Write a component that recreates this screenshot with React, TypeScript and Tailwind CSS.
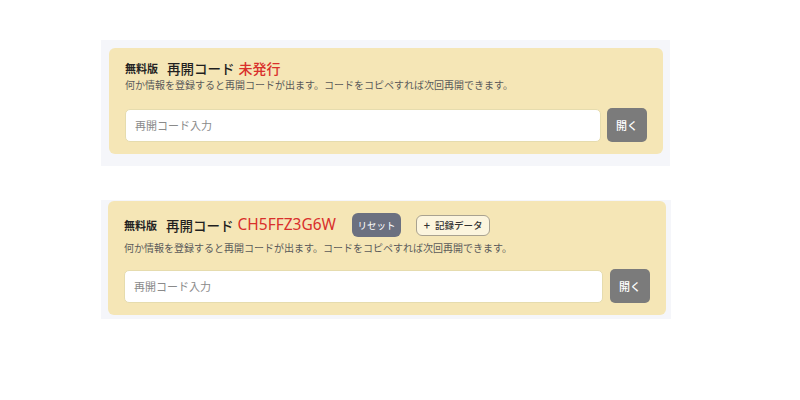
const jp = { fontFamily: '"Noto Sans CJK JP", "Noto Sans", sans-serif' };

function CodeInputRow({ gap }: { gap: string }) {
  return (
    <div className={`flex items-center ${gap}`}>
      <input
        placeholder="再開コード入力"
        className="h-[33px] flex-1 rounded-[5px] border border-[#e6dcae] bg-white px-[9px] text-[11px] text-[#333] outline-none placeholder:text-[#8a8a8a]"
      />
      <button className="h-[34px] w-[40px] rounded-[5px] bg-[#7b7b7b] text-[11px] font-medium text-white">
        開く
      </button>
    </div>
  );
}

function Description() {
  return (
    <p className="text-[10px] leading-[14px] text-[#5a5a5a]">
      何か情報を登録すると再開コードが出ます。コードをコピペすれば次回再開できます。
    </p>
  );
}

export default function App() {
  return (
    <div className="min-h-[400px] w-[800px] bg-white pt-[40px]" style={jp}>
      {/* before a code is issued */}
      <div className="ml-[101px] w-[569px] bg-[#f5f6fa] pb-[12px] pl-[8px] pr-[7px] pt-[8px]">
        <div className="rounded-md bg-[#f5e6b6] px-4 pb-[12px] pt-[10px]">
          <div className="flex h-[20px] items-center">
            <span className="text-[11px] font-bold text-[#222]">無料版</span>
            <span className="ml-[9px] text-[13.5px] font-medium text-[#1f1f1f]">再開コード</span>
            <span className="ml-[4px] text-[14px] font-medium text-[#d9302c]">未発行</span>
          </div>
          <Description />
          <div className="mt-[16px]">
            <CodeInputRow gap="gap-[6px]" />
          </div>
        </div>
      </div>

      {/* after a code is issued */}
      <div className="ml-[101px] mt-[34px] w-[570px] bg-[#f5f6fa] pb-[4px] pl-[7px] pr-[5px] pt-[1px]">
        <div className="rounded-md bg-[#f5e6b6] px-4 pb-[12px] pt-[12px]">
          <div className="flex h-[24px] items-center">
            <span className="text-[11px] font-bold text-[#222]">無料版</span>
            <span className="ml-[9px] text-[13.5px] font-medium text-[#1f1f1f]">再開コード</span>
            <span
              className="ml-[4px] text-[15.5px] font-normal text-[#d9302c]"
              style={{ fontFamily: '"Noto Sans", "Open Sans", sans-serif' }}
            >
              CH5FFZ3G6W
            </span>
            <button className="ml-[16px] h-[24px] w-[49px] rounded-md bg-[#6b7080] text-[9.5px] text-white">
              リセット
            </button>
            <button className="ml-[15px] flex h-[21px] w-[74px] items-center justify-center gap-[5px] rounded-md border border-[#a9a290] bg-[#fcf5de] text-[9.5px] font-medium text-[#333]">
              <span className="text-[11px] leading-none">+</span>
              <span>記録データ</span>
            </button>
          </div>
          <div className="mt-[4px]">
            <Description />
          </div>
          <div className="mt-[14px]">
            <CodeInputRow gap="gap-[7px]" />
          </div>
        </div>
      </div>
    </div>
  );
}
